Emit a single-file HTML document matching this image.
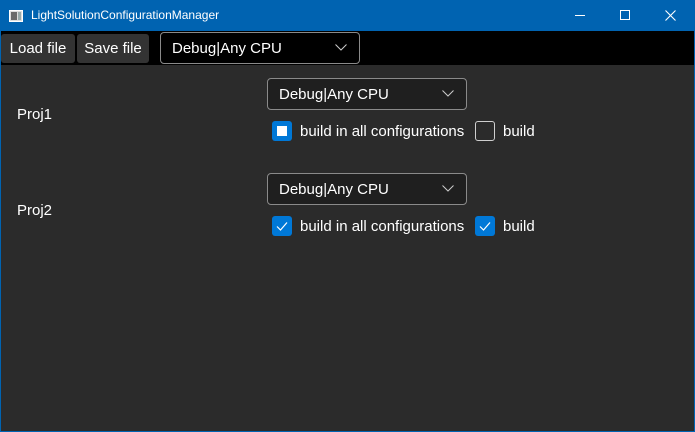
<!DOCTYPE html>
<html><head><style>
*{margin:0;padding:0;box-sizing:border-box}
body{width:695px;height:432px;overflow:hidden;background:#0063b1;font-family:"Liberation Sans",sans-serif;position:relative}
.win{position:absolute;left:1px;top:31px;width:693px;height:400px;background:#2b2b2b}
.bar{position:absolute;left:0;top:0;width:693px;height:34px;background:#000}
.t{position:absolute;color:#fff;white-space:nowrap}
.btn{position:absolute;top:3px;height:29px;background:#333;border-radius:3px;color:#fff;font-size:15px;line-height:30px;text-align:center}
.combo{position:absolute;width:200px;height:32px;border:1px solid #8a8a8a;border-radius:4px;background:#1f1f1f;color:#fff;font-size:15px;line-height:31px;padding-left:11px}
.combo svg{position:absolute;right:12px;top:11px}
.cb{position:absolute;width:20px;height:20px;border-radius:3px;background:#0078d7}
.cb.off{background:transparent;border:1px solid #cfcfcf}
.lbl{position:absolute;color:#fff;font-size:15px}
</style></head><body>
<svg style="position:absolute;left:9px;top:10px" width="14" height="12"><rect x="0.5" y="0.5" width="13" height="11" fill="#ddd" stroke="#fff"/><rect x="2" y="2" width="6" height="8" fill="#6a6a6a"/><rect x="9" y="2" width="3" height="8" fill="#9aa"/></svg>
<div class="t" style="left:31px;top:8px;font-size:12px">LightSolutionConfigurationManager</div>
<div style="position:absolute;left:575px;top:15px;width:10px;height:1px;background:#fff"></div>
<div style="position:absolute;left:620px;top:10px;width:10px;height:10px;border:1px solid #fff"></div>
<svg style="position:absolute;left:665px;top:10px" width="11" height="11"><path d="M0.5 0.5L10.5 10.5M10.5 0.5L0.5 10.5" stroke="#fff" stroke-width="1.1"/></svg>
<div class="win">
<div class="bar">
<div class="btn" style="left:0;width:74px">Load file</div>
<div class="btn" style="left:76px;width:72px">Save file</div>
<div class="combo" style="left:159px;top:1px;background:#000">Debug|Any CPU<svg width="12" height="7"><path d="M0.5 0.5L6 6L11.5 0.5" stroke="#ccc" fill="none"/></svg></div>
</div>
<div class="lbl" style="left:16px;top:75px">Proj1</div>
<div class="lbl" style="left:16px;top:171px">Proj2</div>
<div class="combo" style="left:266px;top:47px">Debug|Any CPU<svg width="12" height="7"><path d="M0.5 0.5L6 6L11.5 0.5" stroke="#ccc" fill="none"/></svg></div>
<div class="cb" style="left:271px;top:90px"><div style="position:absolute;left:5px;top:5px;width:10px;height:10px;background:#fff"></div></div>
<div class="lbl" style="left:299px;top:92px">build in all configurations</div>
<div class="cb off" style="left:474px;top:90px"></div>
<div class="lbl" style="left:502px;top:92px">build</div>
<div class="combo" style="left:266px;top:142px">Debug|Any CPU<svg width="12" height="7"><path d="M0.5 0.5L6 6L11.5 0.5" stroke="#ccc" fill="none"/></svg></div>
<div class="cb" style="left:271px;top:185px"><svg width="20" height="20"><path d="M5 10.5L8.5 14L15 6.5" stroke="#fff" fill="none" stroke-width="1.2"/></svg></div>
<div class="lbl" style="left:299px;top:187px">build in all configurations</div>
<div class="cb" style="left:474px;top:185px"><svg width="20" height="20"><path d="M5 10.5L8.5 14L15 6.5" stroke="#fff" fill="none" stroke-width="1.2"/></svg></div>
<div class="lbl" style="left:502px;top:187px">build</div>
</div>
</body></html>
